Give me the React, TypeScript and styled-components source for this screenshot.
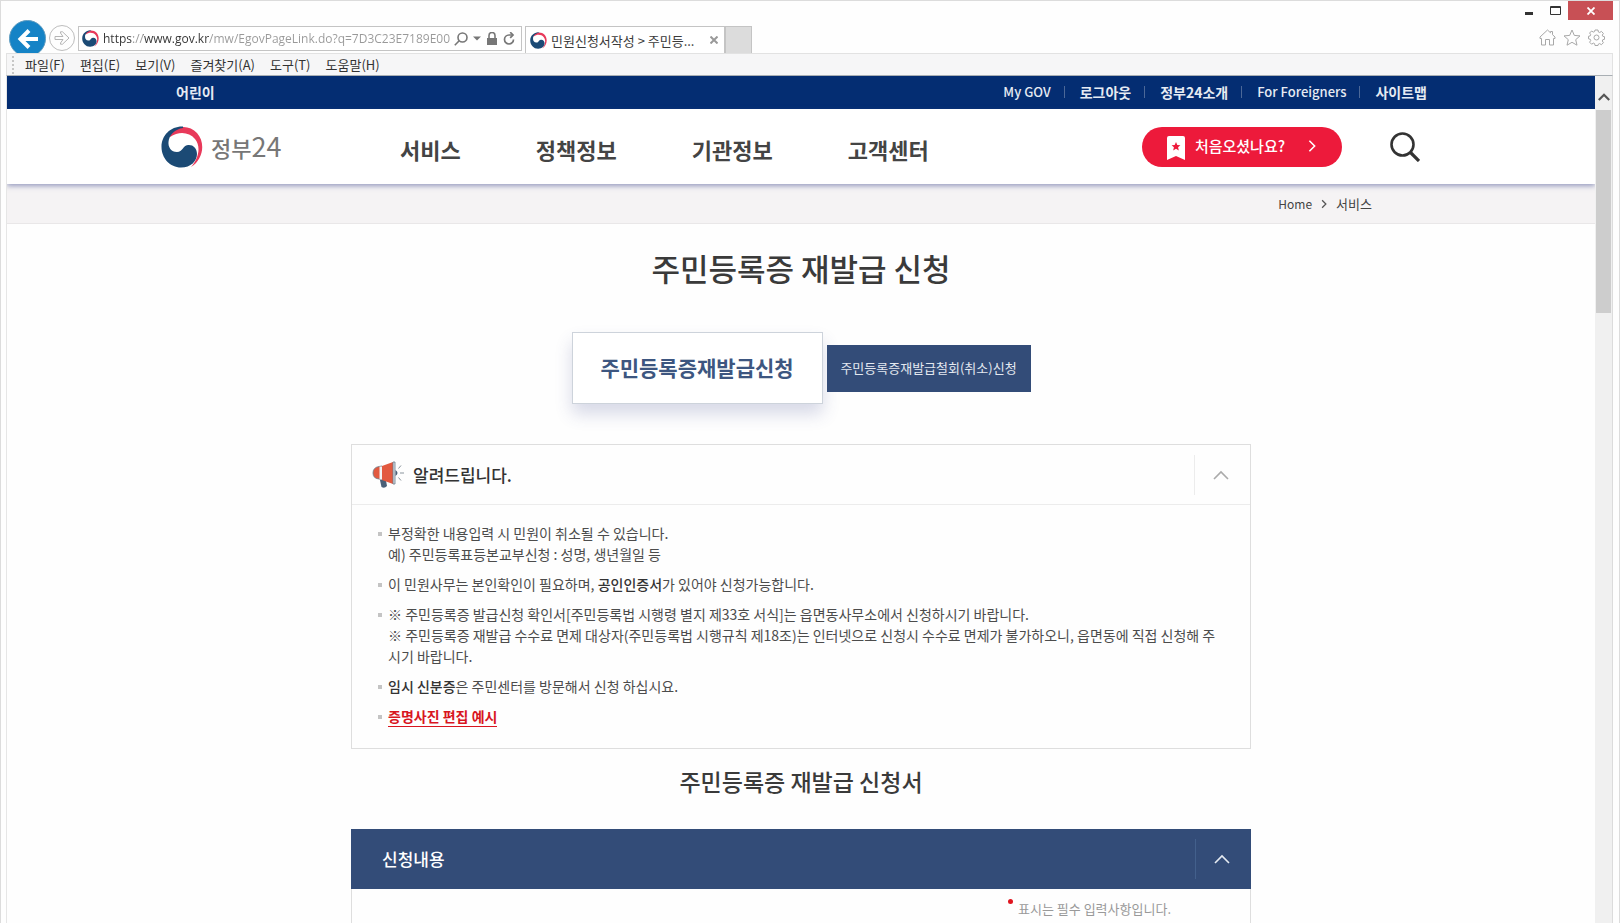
import React from "react";
import styled, { createGlobalStyle } from "styled-components";

const Global = createGlobalStyle`
  *, *::before, *::after { box-sizing: border-box; }
  body { margin: 0; background: #fefefe; font-family: "Noto Sans CJK KR", sans-serif; color: #3a3a3a; }
  button, input { font: inherit; color: inherit; }
  button { padding: 0; border: 0; background: none; display: inline-flex; align-items: center; justify-content: center; cursor: pointer; }
  a { color: inherit; text-decoration: none; }
  h1, h2, ul { margin: 0; padding: 0; }
  ul { list-style: none; }
  svg { display: block; flex: none; }
`;

/* ---------- browser window ---------- */
const Window = styled.div`
  height: 100vh;
  display: flex;
  flex-direction: column;
  border: 1px solid #dcdcdc;
  border-bottom: 0;
  padding: 0 6px 0 5px;
  overflow: hidden;
  background: #fefefe;
`;
const TitleRow = styled.div`
  display: flex;
  justify-content: flex-end;
  height: 19px;
`;
const WinButton = styled.button<{ $close?: boolean }>`
  width: ${(p) => (p.$close ? 45 : 26)}px;
  height: 19px;
  background: ${(p) => (p.$close ? "#c85055" : "transparent")};
`;
const NavRow = styled.div`
  display: flex;
  align-items: flex-end;
  height: 33px;
  padding: 0 8px 0 3px;
`;
const Back = styled.button`
  align-self: flex-start;
  width: 37px;
  height: 37px;
  flex: none;
  border-radius: 50%;
  background: #1583c6;
  border: 1px solid #5f9cc0;
`;
const Forward = styled.button`
  width: 26px;
  height: 26px;
  flex: none;
  margin: 0 3px 2px;
  border-radius: 50%;
  border: 1px solid #bdbdbd;
`;
const AddressBar = styled.form`
  display: flex;
  align-items: center;
  width: 444px;
  height: 25px;
  margin-bottom: 2px;
  padding: 0 6px 0 3px;
  gap: 4px;
  border: 1px solid #c4c4c4;
  background: #fff;
`;
const Url = styled.input`
  flex: 1;
  min-width: 0;
  padding: 0;
  border: 0;
  outline: 0;
  font-family: "Open Sans", sans-serif;
  font-size: 12px;
  color: #333;
  -webkit-text-fill-color: transparent;
  background: linear-gradient(to right, #333 29px, #999 29px, #999 40px, #333 40px, #333 106px, #999 106px);
  -webkit-background-clip: text;
  background-clip: text;
`;
const AddressTools = styled.div`
  display: flex;
  align-items: center;
  gap: 5px;
`;
const Tab = styled.div`
  display: flex;
  align-items: center;
  gap: 4px;
  width: 200px;
  height: 27px;
  margin-left: 3px;
  padding: 0 6px 0 4px;
  border: 1px solid #c4c4c4;
  border-bottom: 0;
  background: #fff;
  font-size: 13px;
  white-space: nowrap;
  button { margin-left: auto; }
`;
const NewTab = styled.button`
  width: 27px;
  height: 27px;
  background: #dcdcdc;
  border: 1px solid #c4c4c4;
  border-bottom: 0;
`;
const BrowserTools = styled.div`
  display: flex;
  gap: 7px;
  margin: 0 0 7px auto;
`;
const MenuBar = styled.nav`
  position: relative;
  display: flex;
  align-items: center;
  gap: 15px;
  height: 23px;
  flex: none;
  padding-left: 5px;
  background: #f6f6f7;
  border: 1px solid #e2e2e2;
  border-bottom-color: #a9afb4;
  font-size: 13px;
  color: #333;
`;
const Grip = styled.span`
  height: 18px;
  margin-right: -4px;
  border-left: 2px dotted #c6c6c6;
`;

/* ---------- viewport ---------- */
const Viewport = styled.div`
  flex: 1;
  min-height: 0;
  display: flex;
  overflow: hidden;
`;
const Page = styled.div`
  flex: 1;
  min-width: 0;
  overflow: hidden;
  border-left: 1px solid #e6e6e6;
`;
const ScrollTrack = styled.div`
  width: 18px;
  display: flex;
  flex-direction: column;
  align-items: center;
  background: #f0f0f0;
  border-right: 1px solid #dcdcdc;
  button { width: 17px; height: 34px; padding-top: 8px; }
`;
const ScrollThumb = styled.div`
  width: 15px;
  height: 24%;
  background: #cdcdcd;
`;

/* ---------- site header ---------- */
const TopBar = styled.div`
  display: flex;
  justify-content: space-between;
  align-items: center;
  height: 33px;
  padding: 0 168px 2px 169px;
  background: #042d72;
  color: #e6ebf3;
  font-size: 14px;
  font-weight: 700;
`;
const UtilLinks = styled.ul`
  display: flex;
  li { display: flex; align-items: center; }
  li + li::before { content: ""; width: 1px; height: 12px; margin: 0 15px 0 13px; background: #4c6898; }
`;
const UtilLink = styled.a<{ $latin: boolean }>`
  font-size: ${(p) => (p.$latin ? 13 : 14)}px;
  font-weight: ${(p) => (p.$latin ? 500 : 700)};
`;
const Header = styled.header`
  position: relative;
  display: flex;
  align-items: center;
  height: 75px;
  padding: 0 175px 0 154px;
  background: #fff;
  box-shadow: 0 2px 5px rgba(60, 72, 140, 0.5);
`;
const Logo = styled.a`
  display: flex;
  align-items: center;
  gap: 8px;
  width: 239px;
  color: #777;
  font-size: 22px;
  font-weight: 500;
  span { line-height: 40px; }
  b { font-weight: 400; font-size: 27px; }
`;
const MainNav = styled.ul`
  display: flex;
  gap: 75px;
  padding-top: 4px;
  font-size: 22px;
  line-height: 32px;
  font-weight: 700;
  color: #444;
`;
const Welcome = styled.button`
  width: 200px;
  height: 40px;
  margin-left: auto;
  padding: 0 0 2px 2px;
  gap: 10px;
  border-radius: 20px;
  background: #ed1a3b;
  color: #fff;
  font-size: 15px;
  font-weight: 500;
  svg:first-child { margin-top: 5px; }
  svg:last-child { margin-left: 10px; }
`;
const SearchButton = styled.button`
  margin-left: 48px;
`;
const Crumbs = styled.nav`
  display: flex;
  justify-content: flex-end;
  align-items: center;
  gap: 7px;
  height: 40px;
  padding-right: 223px;
  background: #f5f3f4;
  border-bottom: 1px solid #e9e7e8;
  font-size: 13px;
  color: #444;
  a:first-child { font-size: 12px; }
`;

/* ---------- main content ---------- */
const Main = styled.main`
  width: 900px;
  max-width: 100%;
  margin: 0 auto;
`;
const Title = styled.h1`
  margin-top: 21px;
  text-align: center;
  font-size: 31px;
  line-height: 46px;
  font-weight: 500;
`;
const SubTitle = styled.h2`
  padding: 15px 0 30px;
  text-align: center;
  font-size: 23px;
  line-height: 35px;
  font-weight: 500;
`;
const Tabs = styled.div`
  display: flex;
  justify-content: center;
  align-items: center;
  gap: 4px;
  margin: 41px 0 40px;
`;
const TabButton = styled.button<{ $active?: boolean }>`
  height: ${(p) => (p.$active ? 72 : 47)}px;
  width: ${(p) => (p.$active ? 251 : 204)}px;
  padding-bottom: 2px;
  font-size: ${(p) => (p.$active ? 21 : 13)}px;
  font-weight: ${(p) => (p.$active ? 700 : 400)};
  color: ${(p) => (p.$active ? "#3d5680" : "#e3e8f0")};
  background: ${(p) => (p.$active ? "#fff" : "#334c78")};
  border: ${(p) => (p.$active ? "1px solid #cdd3db" : "0")};
  box-shadow: ${(p) => (p.$active ? "0 10px 16px rgba(60, 72, 140, 0.2)" : "none")};
`;
const Panel = styled.section<{ $solid?: boolean }>`
  border: 1px solid #dedede;
  border-top-width: ${(p) => (p.$solid ? 0 : 1)}px;
`;
const PanelHead = styled.div<{ $solid?: boolean }>`
  display: flex;
  align-items: center;
  height: 60px;
  margin: ${(p) => (p.$solid ? "0 -1px" : "0")};
  padding: 0 0 0 ${(p) => (p.$solid ? 31 : 20)}px;
  gap: 9px;
  background: ${(p) => (p.$solid ? "#334c78" : "transparent")};
  color: ${(p) => (p.$solid ? "#fff" : "#333")};
  border-bottom: 1px solid ${(p) => (p.$solid ? "#334c78" : "#ececec")};
  h2 { font-size: 17px; font-weight: 500; line-height: 26px; }
  button {
    width: 56px;
    height: 40px;
    margin-left: auto;
    padding-right: 4px;
    border-left: 1px solid ${(p) => (p.$solid ? "#43608c" : "#ececec")};
  }
`;
const Notices = styled.ul`
  display: flex;
  flex-direction: column;
  gap: 9px;
  padding: 18px 24px 21px 36px;
  font-size: 14px;
  line-height: 21px;
  color: #4c4c4c;
  li { position: relative; }
  li::before { content: ""; position: absolute; left: -10px; top: 9px; width: 4px; height: 4px; background: #c4c4c4; }
  b { font-weight: 500; color: #333; }
`;
const RedLink = styled.a`
  color: #d8151f;
  font-weight: 700;
  border-bottom: 1px solid #d8151f;
`;
const Required = styled.p`
  display: flex;
  justify-content: flex-end;
  gap: 5px;
  margin: 0;
  padding: 10px 79px 40px 0;
  font-size: 13px;
  line-height: 20px;
  color: #999;
  &::before { content: ""; width: 5px; height: 5px; border-radius: 50%; background: #e0151f; }
`;

const Taegeuk = ({ size }: { size: number }) => (
  <svg width={size} height={size} viewBox="0 0 42 42" aria-hidden="true">
    <path d="M9 7 C16 -1 29 -1 36 7 C45 17 42 34 30 41 C38 32 40 20 34 13 C28 6 18 5 9 11 Z" fill="#e8395a" />
    <path d="M22 .5 C10 0 .5 9 .5 21 C.5 32 9 41.500 20 41.500 C30 41.500 36 35 36 28 C36 22 32 18.500 27 19 C21 20 22 26 16 26 C10 26 7 21 7.500 16 C8 9 14 3 22 2 Z" fill="#1b4a75" />
  </svg>
);

const Chevron = ({ color, dir = "up", size = 16, w = 2 }: { color: string; dir?: "up" | "right"; size?: number; w?: number }) => (
  <svg width={size} height={size} viewBox="0 0 16 16" fill="none" stroke={color} strokeWidth={w} aria-hidden="true">
    <path d={dir === "up" ? "M1 12 L8 5 L15 12" : "M5 2 L11 8 L5 14"} />
  </svg>
);

const menus = ["파일(F)", "편집(E)", "보기(V)", "즐겨찾기(A)", "도구(T)", "도움말(H)"];
const utils = [
  { label: "My GOV", latin: true },
  { label: "로그아웃", latin: false },
  { label: "정부24소개", latin: false },
  { label: "For Foreigners", latin: true },
  { label: "사이트맵", latin: false },
];
const navs = ["서비스", "정책정보", "기관정보", "고객센터"];

export default function App() {
  return (
    <Window>
      <Global />
      <TitleRow>
        <WinButton aria-label="최소화">
          <svg width="8" height="10"><rect y="6" width="8" height="3" fill="#333" /></svg>
        </WinButton>
        <WinButton aria-label="최대화">
          <svg width="11" height="9"><path d="M0.5 0.5h10v8h-10zM0 1.5h11" fill="none" stroke="#333" /></svg>
        </WinButton>
        <WinButton $close aria-label="닫기">
          <svg width="8" height="8" viewBox="0 0 8 8" stroke="#fff" strokeWidth="1.8"><path d="M0.5 0.5l7 7M7.5 .5l-7 7" /></svg>
        </WinButton>
      </TitleRow>
      <NavRow>
        <Back aria-label="뒤로">
          <svg width="22" height="20" viewBox="0 0 22 20" fill="none" stroke="#fff" strokeWidth="4"><path d="M21 10H4M12 1.5L3.5 10L12 18.5" /></svg>
        </Back>
        <Forward aria-label="앞으로">
          <svg width="16" height="14" viewBox="0 0 16 14" fill="none" stroke="#b5b5b5"><path d="M1 5.5h8L6.5 2V.8h2L15 7l-6.5 6.2h-2V12L9 8.500H1z" /></svg>
        </Forward>
        <AddressBar>
          <Taegeuk size={17} />
          <Url aria-label="주소" defaultValue="https://www.gov.kr/mw/EgovPageLink.do?q=7D3C23E7189E00350" />
          <AddressTools>
            <svg width="14" height="14" viewBox="0 0 14 14" fill="none" stroke="#777" strokeWidth="1.6"><circle cx="8.5" cy="5.5" r="4.5" /><path d="M5.2 8.8L.8 13.2" /></svg>
            <svg width="8" height="5" viewBox="0 0 8 5"><path d="M0 .5h8L4 4.5z" fill="#777" /></svg>
            <svg width="12" height="13" viewBox="0 0 12 13"><path d="M3 6V3.5a3 3 0 016 0V6" fill="none" stroke="#777" strokeWidth="1.6" /><rect x="1" y="6" width="10" height="7" fill="#777" /></svg>
            <svg width="12" height="13" viewBox="0 0 12 13" fill="none" stroke="#777" strokeWidth="1.7"><path d="M10.5 7.5A4.5 4.5 0 116 3h3.5" /><path d="M7.2 .2L10 3L7.2 5.8" /></svg>
          </AddressTools>
        </AddressBar>
        <Tab>
          <Taegeuk size={17} />
          <span>민원신청서작성 &gt; 주민등...</span>
          <button aria-label="탭 닫기">
            <svg width="8" height="8" viewBox="0 0 8 8" stroke="#999" strokeWidth="2"><path d="M.5 .5l7 7M7.5 .5l-7 7" /></svg>
          </button>
        </Tab>
        <NewTab aria-label="새 탭" />
        <BrowserTools>
          <button aria-label="홈">
            <svg width="17" height="17" viewBox="0 0 17 17" fill="none" stroke="#a8a8a8"><path d="M8.5 1L1 8v1.5h1.5V16H6.5v-5.5h4V16h4V9.5H16V8l-2.5-2.3V2.5h-2v1.3z" /></svg>
          </button>
          <button aria-label="즐겨찾기">
            <svg width="18" height="17" viewBox="0 0 18 17" fill="none" stroke="#a8a8a8"><path d="M9 1l2.3 5.4 5.7.5-4.3 3.8 1.3 5.5L9 13.3 4 16.2l1.3-5.5L1 6.900l5.700-.5z" /></svg>
          </button>
          <button aria-label="설정">
            <svg width="17" height="17" viewBox="0 0 17 17" fill="none" stroke="#a8a8a8"><path d="M7 1h3l.4 2 1.3.5 1.7-1.1 2 2-1.1 1.7.5 1.2 1.7.4v2.6l-1.7.4-.5 1.3 1.1 1.7-2 2-1.7-1.1-1.3.5L10 16.5H7l-.4-1.9-1.3-.5-1.7 1.1-2-2 1.1-1.7-.5-1.3L.5 9.8V7.3l1.7-.4.5-1.2L1.6 4l2-2 1.7 1.1L6.6 2.6z" /><circle cx="8.5" cy="8.5" r="2.5" /></svg>
          </button>
        </BrowserTools>
      </NavRow>
      <MenuBar>
        <Grip />
        {menus.map((m) => <button key={m}>{m}</button>)}
      </MenuBar>
      <Viewport>
        <Page>
          <TopBar>
            <a href="#kids">어린이</a>
            <UtilLinks>
              {utils.map((u) => <li key={u.label}><UtilLink $latin={u.latin} href="#util">{u.label}</UtilLink></li>)}
            </UtilLinks>
          </TopBar>
          <Header>
            <Logo href="#home"><Taegeuk size={42} /><span>정부<b>24</b></span></Logo>
            <MainNav>{navs.map((n) => <li key={n}><a href="#nav">{n}</a></li>)}</MainNav>
            <Welcome>
              <svg width="18" height="24" viewBox="0 0 18 24">
                <path d="M2 0h14a2 2 0 012 2v22l-9-4-9 4V2a2 2 0 012-2z" fill="#fff" />
                <path d="M9 6l1.3 2.9 3.1.3-2.3 2.1.7 3.1L9 12.8l-2.8 1.6.7-3.1-2.3-2.1 3.1-.3z" fill="#ed1a3b" />
              </svg>
              처음오셨나요?
              <Chevron color="#fff" dir="right" size={14} w={1.8} />
            </Welcome>
            <SearchButton aria-label="검색">
              <svg width="30" height="30" viewBox="0 0 30 30" fill="none" stroke="#333" strokeWidth="2.600"><circle cx="12.500" cy="12.500" r="11" /><path d="M20.500 20.500l8.500 8.500" strokeWidth="3.200" /></svg>
            </SearchButton>
          </Header>
          <Crumbs>
            <a href="#home">Home</a>
            <Chevron color="#555" dir="right" size={10} />
            <a href="#service">서비스</a>
          </Crumbs>
          <Main>
            <Title>주민등록증 재발급 신청</Title>
            <Tabs>
              <TabButton $active>주민등록증재발급신청</TabButton>
              <TabButton>주민등록증재발급철회(취소)신청</TabButton>
            </Tabs>
            <Panel>
              <PanelHead>
                <svg width="32" height="28" viewBox="0 0 32 28">
                  <path d="M7.500 17h6l1.500 8q-2.500 3-5.500 1z" fill="#4a6078" />
                  <path d="M7 5.500Q1 6.500 1 12t6 6l3 .5V5z" fill="#e2593f" stroke="#6b7c8c" strokeWidth=".8" />
                  <path d="M10 5l11-4v22l-11-4z" fill="#e2593f" />
                  <path d="M7.500 5.500H10V18.500H7.500z" fill="#f3f3f3" />
                  <path d="M21 1h2v22h-2z" fill="#d8e0e6" stroke="#6b7c8c" strokeWidth=".8" />
                  <path d="M23.500 9q4 3 0 6z" fill="#4a6078" />
                  <path d="M28 12h4M26.500 7.500l2.500-3M26.500 16.500l2.500 3" stroke="#8a949c" />
                </svg>
                <h2>알려드립니다.</h2>
                <button aria-label="접기"><Chevron color="#aaa" w={1.6} /></button>
              </PanelHead>
              <Notices>
                <li>부정확한 내용입력 시 민원이 취소될 수 있습니다.<br />예) 주민등록표등본교부신청 : 성명, 생년월일 등</li>
                <li>이 민원사무는 본인확인이 필요하며, <b>공인인증서</b>가 있어야 신청가능합니다.</li>
                <li>※ 주민등록증 발급신청 확인서[주민등록법 시행령 별지 제33호 서식]는 읍면동사무소에서 신청하시기 바랍니다.<br />※ 주민등록증 재발급 수수료 면제 대상자(주민등록법 시행규칙 제18조)는 인터넷으로 신청시 수수료 면제가 불가하오니, 읍면동에 직접 신청해 주시기 바랍니다.</li>
                <li><b>임시 신분증</b>은 주민센터를 방문해서 신청 하십시요.</li>
                <li><RedLink href="#photo">증명사진 편집 예시</RedLink></li>
              </Notices>
            </Panel>
            <SubTitle>주민등록증 재발급 신청서</SubTitle>
            <Panel $solid>
              <PanelHead $solid>
                <h2>신청내용</h2>
                <button aria-label="접기"><Chevron color="#e6ebf2" w={1.6} /></button>
              </PanelHead>
              <Required>표시는 필수 입력사항입니다.</Required>
            </Panel>
          </Main>
        </Page>
        <ScrollTrack>
          <button aria-label="위로"><Chevron color="#555" size={12} w={3} /></button>
          <ScrollThumb />
        </ScrollTrack>
      </Viewport>
    </Window>
  );
}
